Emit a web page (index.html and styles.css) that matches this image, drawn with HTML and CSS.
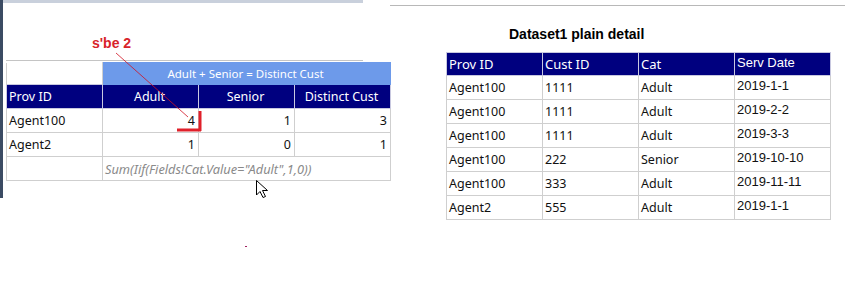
FILE: index.html
```html
<!DOCTYPE html>
<html>
<head>
<meta charset="utf-8">
<link rel="stylesheet" href="styles.css">
</head>
<body>
<div class="page">
  <div class="left-frame">
    <div class="strip"></div>
    <div class="left-body">
      <div class="ruler"></div>
      <table class="matrix">
        <colgroup><col class="c1"><col class="c2"><col class="c2"><col class="c2"></colgroup>
        <tr class="group-row">
          <td class="blank"></td>
          <td class="group" colspan="3">Adult + Senior = Distinct Cust</td>
        </tr>
        <tr class="head">
          <td class="l">Prov ID</td>
          <td class="c">Adult</td>
          <td class="c">Senior</td>
          <td class="c">Distinct Cust</td>
        </tr>
        <tr>
          <td class="l">Agent100</td>
          <td class="r">4</td>
          <td class="r">1</td>
          <td class="r">3</td>
        </tr>
        <tr>
          <td class="l">Agent2</td>
          <td class="r">1</td>
          <td class="r">0</td>
          <td class="r">1</td>
        </tr>
        <tr>
          <td></td>
          <td class="formula" colspan="3">Sum(Iif(Fields!Cat.Value="Adult",1,0))</td>
        </tr>
      </table>
    </div>
    <div class="note">s'be 2</div>
    <svg class="marks" width="390" height="200" viewBox="0 0 390 200">
      <line x1="116" y1="53" x2="188" y2="117" stroke="#d01020" stroke-width="0.8"/>
      <path d="M177 130 H201 M200 111 V131" stroke="#e0202a" stroke-width="3" fill="none"/>
      <path d="M256.5 180.5 V195 L260 191.5 L263 197.5 L265.5 196.5 L262.5 190.5 L267.5 190.5 Z" fill="#fff" stroke="#000" stroke-width="1"/>
    </svg>
  </div>
  <div class="right">
    <div class="topline"></div>
    <h1 class="title">Dataset1 plain detail</h1>
    <table class="detail">
      <colgroup><col class="d"><col class="d"><col class="d"><col class="d"></colgroup>
      <tr class="head">
        <td>Prov ID</td><td>Cust ID</td><td>Cat</td><td class="date">Serv Date</td>
      </tr>
      <tr><td>Agent100</td><td>1111</td><td>Adult</td><td class="date">2019-1-1</td></tr>
      <tr><td>Agent100</td><td>1111</td><td>Adult</td><td class="date">2019-2-2</td></tr>
      <tr><td>Agent100</td><td>1111</td><td>Adult</td><td class="date">2019-3-3</td></tr>
      <tr><td>Agent100</td><td>222</td><td>Senior</td><td class="date">2019-10-10</td></tr>
      <tr><td>Agent100</td><td>333</td><td>Adult</td><td class="date">2019-11-11</td></tr>
      <tr><td>Agent2</td><td>555</td><td>Adult</td><td class="date">2019-1-1</td></tr>
    </table>
  </div>
  <div class="dot"></div>
</div>
</body>
</html>
```

FILE: styles.css
```css
* { box-sizing: border-box; }
html, body { margin: 0; padding: 0; background: #fff; }
body { font-family: "Noto Sans", "DejaVu Sans", sans-serif; width: 845px; height: 303px; overflow: hidden; }

.page { position: relative; display: flex; align-items: flex-start; height: 303px; }

.left-frame {
  position: relative;
  width: 390px;
  height: 198px;
  border-left: 3px solid #3b4b63;
  flex: none;
}
.strip { width: 360px; height: 3px; background: #c9d0dc; }
.left-body { padding: 57px 0 0 3px; }
.ruler { width: 357px; height: 1px; background: #c4c4c4; margin-bottom: 1px; }

table { border-collapse: collapse; table-layout: fixed; }
.matrix { width: 384px; font-size: 12.5px; color: #111; }
.matrix col.c1 { width: 96px; }
.matrix col.c2 { width: 96px; }
.matrix td { border: 1px solid #cfcfcf; height: 24px; padding: 0 4px 0 2px; white-space: nowrap; overflow: hidden; }
.matrix .group-row td { height: 22px; }
.matrix td.blank { border-top: none; border-bottom: none; }
.matrix td.group { background: #6d9aea; color: #fff; text-align: center; border-color: #6d9aea; font-size: 11.5px; }
.matrix .head td { background: #00007f; color: #fff; border-color: #c8c8e0; }
.matrix .l { text-align: left; }
.matrix .c { text-align: center; }
.matrix .r { text-align: right; padding-right: 3px; }
.matrix td.formula { font-style: italic; color: #8a8a8a; font-size: 12.8px; padding-left: 2px; }

.note {
  position: absolute;
  left: 89px; top: 35px;
  font-family: "Liberation Sans", Arial, sans-serif;
  font-weight: bold; font-size: 14px; color: #d8232a;
}
.marks { position: absolute; left: -3px; top: 0; overflow: visible; }

.right { position: relative; flex: none; width: 455px; }
.topline { height: 1px; background: #b8b8b8; margin-top: 5px; }
.title {
  margin: 20px 0 0 119px;
  font-family: "Liberation Sans", Arial, sans-serif;
  font-size: 14px; font-weight: bold; color: #000;
  line-height: 16px; height: 26px;
}
.detail { margin-left: 56px; width: 384px; font-size: 12.5px; color: #111; }
.detail col.d { width: 96px; }
.detail td { border: 1px solid #cfcfcf; height: 24px; padding: 0 2px; white-space: nowrap; }
.detail .head td { background: #00007f; color: #fff; height: 23px; border-color: #c8c8e0; font-size: 13px; }
.detail td.date { font-family: "Liberation Sans", Arial, sans-serif; font-size: 13px; vertical-align: top; padding-top: 2px; }

.dot { position: absolute; left: 245px; top: 246px; width: 2px; height: 1px; background: #a02060; }
```
